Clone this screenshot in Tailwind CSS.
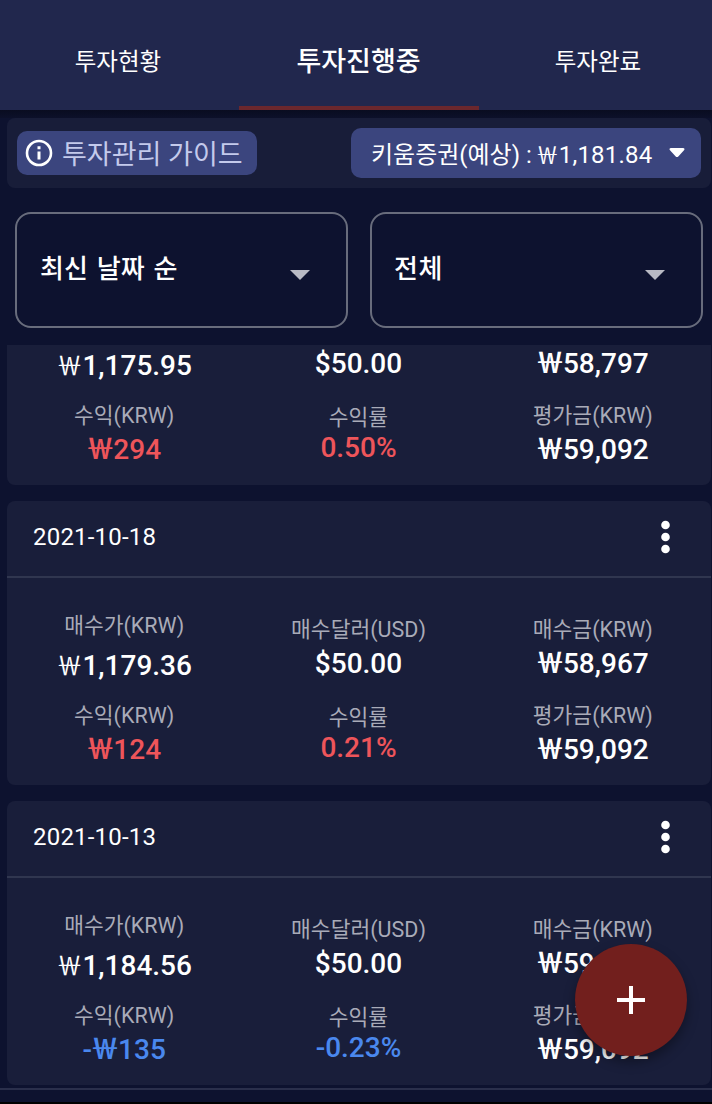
<!DOCTYPE html>
<html lang="ko">
<head>
    <meta charset="UTF-8">
    <title>투자진행중</title>
    <meta name="viewport" content="width=device-width, initial-scale=1.0" />
    <script src="https://cdn.jsdelivr.net/npm/@tailwindcss/browser@4"></script>
</head>
<body class="flex flex-col h-[1104px] overflow-hidden bg-[#0d122f] text-white font-['Roboto','Noto_Sans_CJK_KR',sans-serif]">

    <!-- tabs -->
    <nav class="relative z-10 shrink-0 h-[110px] overflow-hidden bg-[#21274d]">
        <div class="grid grid-cols-3 w-[720px] h-full -ml-px text-center">
            <div class="pt-[47px] pr-0.5 text-[23.5px] leading-[30px]">투자현황</div>
            <div class="pt-[45px] pr-px text-[27px] leading-[34px] font-medium border-b-4 border-[#6b272d]">투자진행중</div>
            <div class="pt-[47px] pr-0.5 text-[23.5px] leading-[30px]">투자완료</div>
        </div>
    </nav>
    <!-- end tabs -->

    <!-- guide + rate -->
    <div class="shrink-0 h-2 bg-gradient-to-b from-[#090c20] to-[#0c102a]"></div>
    <div class="shrink-0 flex items-center justify-between ml-[7px] mr-px h-[70px] px-2.5 rounded-lg bg-[#181d39]">
        <button class="flex items-center w-60 h-11 pl-2 rounded-[10px] bg-[#3b457e] text-[#c4caec] text-[27px]">
            <svg class="size-7 shrink-0 text-white" viewBox="0 0 28 28" fill="none" stroke="currentColor">
                <circle cx="14" cy="14" r="12" stroke-width="2.6"/>
                <path d="M14 12.5v8M14 7.3v3" stroke-width="3"/>
            </svg>
            <span class="ml-[9px] pt-[3px] leading-[34px] whitespace-nowrap">투자관리 가이드</span>
        </button>
        <button class="flex items-center justify-between w-[350px] h-[50px] pl-5 pr-4 rounded-[10px] bg-[#3b457e] text-[24px]">
            <span class="pt-1 leading-8 whitespace-nowrap">키움증권(예상) : <span class="-ml-0.5 font-['Noto_Sans_CJK_KR'] text-[23px] leading-none">￦</span><span class="tracking-[0.2px]">1,181.84</span></span>
            <svg class="w-4 h-3 shrink-0" viewBox="0 0 16 12" fill="currentColor">
                <path d="M2 1h12c1.500 0 2 1.300 1 2.300L9.300 9.400c-.8.800-1.800.8-2.600 0L1 3.300C0 2.300.5 1 2 1z"/>
            </svg>
        </button>
    </div>
    <!-- end guide -->

    <!-- filters -->
    <div class="shrink-0 flex gap-[22px] mt-6 ml-[15px] text-[26px] font-medium">
        <div class="flex justify-between w-[333px] h-[116px] rounded-2xl border-2 border-[#686c7c] pl-[23px] pr-[36px]">
            <span class="mt-[37px] leading-9 [word-spacing:2.5px]">최신 날짜 순</span>
            <svg class="mt-[56px] w-5 h-2.5" viewBox="0 0 20 10" fill="#b8bac4"><path d="M0 0h20L10 10z"/></svg>
        </div>
        <div class="flex justify-between w-[333px] h-[116px] rounded-2xl border-2 border-[#686c7c] pl-[22px] pr-[36px]">
            <span class="mt-[37px] leading-9 tracking-[0.5px]">전체</span>
            <svg class="mt-[56px] w-5 h-2.5" viewBox="0 0 20 10" fill="#b8bac4"><path d="M0 0h20L10 10z"/></svg>
        </div>
    </div>
    <!-- end filters -->

    <!-- list -->
    <div id="list" class="shrink-0 h-[743px] mt-[17px] pl-[7px] pr-px overflow-hidden"></div>
    <div class="shrink-0 h-3.5 border-t-2 border-[#2a2f4b] bg-[#0d122f]"></div>
    <div class="shrink-0 h-0.5 bg-black"></div>

    <!-- add -->
    <button class="absolute z-20 left-[575px] top-[944px] flex items-center justify-center size-28 rounded-full bg-[#721f1d] shadow-[0_6px_12px_rgba(0,0,0,0.35)]">
        <svg class="size-7" viewBox="0 0 28 28" stroke="#fff" stroke-width="4"><path d="M14 0v28M0 14h28"/></svg>
    </button>

</body>
<script>

    // the first one is scrolled under the filters, only its lower part is drawn
    const items = [
        { price: '1,175.95', cost: '58,797', profit: '294', rate: '0.50%', value: '59,092' },
        { date: '2021-10-18', price: '1,179.36', cost: '58,967', profit: '124', rate: '0.21%', value: '59,092' },
        { date: '2021-10-13', price: '1,184.56', cost: '59,228', profit: '135', rate: '-0.23%', value: '59,092' }
    ]

    const won = `<span class="-mx-px font-['Noto_Sans_CJK_KR'] font-bold leading-none">￦</span>`

    const label = text => `<p class="h-[30px] text-[21.5px] leading-[30px] font-normal text-[#a9abb8]">${text}</p>`

    // one investment card
    const card = item => {

        const loss = item.rate[0] == '-',
            color = loss ? 'text-[#4a88ee]' : 'text-[#ee555a]'

        return `
        <section class="${item.date ? 'mt-4 h-[284px] rounded-lg' : 'h-[140px] rounded-b-lg'} bg-[#191e3a]">
            ${item.date ? `
            <header class="flex items-center justify-between h-[77px] pl-[26px] pr-10 border-b-2 border-[#30364f]">
                <span class="text-[24px] leading-[30px] tracking-[0.2px] -mt-1">${item.date}</span>
                <svg class="w-3 h-8 -mt-1" viewBox="0 0 12 32" fill="#fff" overflow="visible">
                    <circle cx="6.500" cy="4" r="4.300"/><circle cx="6.500" cy="16" r="4.300"/><circle cx="6.500" cy="28" r="4.300"/>
                </svg>
            </header>` : ''}
            <div class="grid grid-cols-3 pr-px text-center text-[28px] leading-[34px] font-medium">
                <div class="${item.date ? 'pt-[33px]' : 'pt-1'}">
                    ${item.date ? label('매수가(KRW)') : ''}
                    <p class="${item.date ? 'mt-2' : ''} h-[34px]"><span class="font-['Noto_Sans_CJK_KR'] font-normal text-[26px] leading-none">￦</span>${item.price}</p>
                    <div class="h-[18px]"></div>
                    ${label('수익(KRW)')}
                    <p class="mt-0.5 h-[34px] ${color}">${loss ? '-' : ''}${won}${item.profit}</p>
                </div>
                <div class="${item.date ? 'pt-[37px]' : 'pt-0.5'}">
                    ${item.date ? label('매수달러(USD)') : ''}
                    <p class="${item.date ? 'mt-0.5' : ''} h-[34px]">$50.00</p>
                    <div class="h-[22px]"></div>
                    ${label('수익률')}
                    <p class="-mt-0.5 h-[34px] ${color}">${item.rate}</p>
                </div>
                <div class="${item.date ? 'pt-[37px]' : 'pt-0.5'}">
                    ${item.date ? label('매수금(KRW)') : ''}
                    <p class="${item.date ? 'mt-0.5' : ''} h-[34px]">${won}${item.cost}</p>
                    <div class="h-5"></div>
                    ${label('평가금(KRW)')}
                    <p class="mt-0.5 h-[34px]">${won}${item.value}</p>
                </div>
            </div>
        </section>`
    }

    document.getElementById('list').innerHTML = items.map(card).join('')

</script>
</html>
